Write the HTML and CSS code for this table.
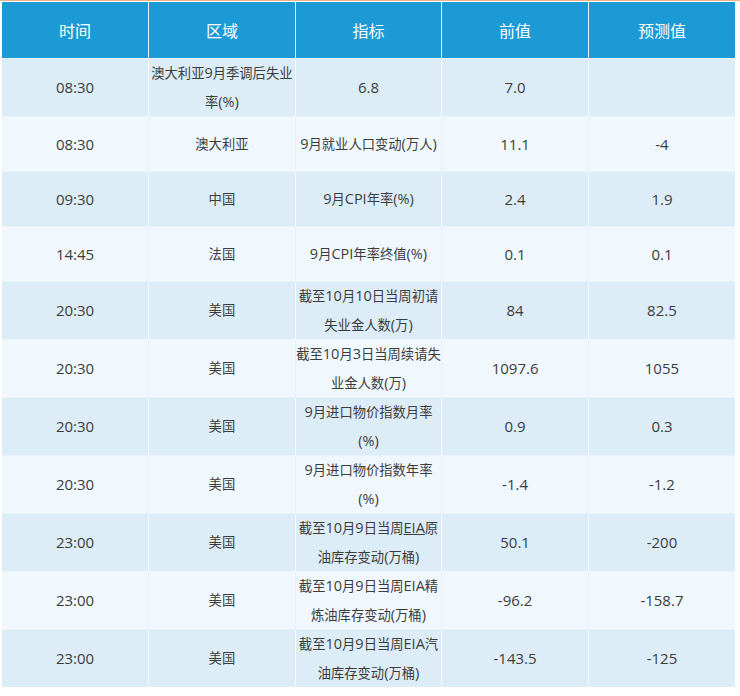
FILE: index.html
```html
<!DOCTYPE html>
<html lang="zh">
<head>
<meta charset="utf-8">
<title>财经日历</title>
<link rel="stylesheet" href="styles.css">
</head>
<body>
<div class="wrap">
<table class="cal">
  <colgroup><col><col><col><col><col></colgroup>
  <thead>
    <tr><th>时间</th><th>区域</th><th>指标</th><th>前值</th><th>预测值</th></tr>
  </thead>
  <tbody>
    <tr><td class="n">08:30</td><td>澳大利亚<span class="n">9</span>月季调后失业率<span class="n">(%)</span></td><td class="n">6.8</td><td class="n">7.0</td><td class="n"></td></tr>
    <tr><td class="n">08:30</td><td>澳大利亚</td><td><span class="n">9</span>月就业人口变动<span class="n">(</span>万人<span class="n">)</span></td><td class="n">11.1</td><td class="n">-4</td></tr>
    <tr><td class="n">09:30</td><td>中国</td><td><span class="n">9</span>月<span class="n">CPI</span>年率<span class="n">(%)</span></td><td class="n">2.4</td><td class="n">1.9</td></tr>
    <tr><td class="n">14:45</td><td>法国</td><td><span class="n">9</span>月<span class="n">CPI</span>年率终值<span class="n">(%)</span></td><td class="n">0.1</td><td class="n">0.1</td></tr>
    <tr><td class="n">20:30</td><td>美国</td><td>截至<span class="n">10</span>月<span class="n">10</span>日当周初请失业金人数<span class="n">(</span>万<span class="n">)</span></td><td class="n">84</td><td class="n">82.5</td></tr>
    <tr><td class="n">20:30</td><td>美国</td><td>截至<span class="n">10</span>月<span class="n">3</span>日当周续请失业金人数<span class="n">(</span>万<span class="n">)</span></td><td class="n">1097.6</td><td class="n">1055</td></tr>
    <tr><td class="n">20:30</td><td>美国</td><td><span class="n">9</span>月进口物价指数月率<span class="n">(%)</span></td><td class="n">0.9</td><td class="n">0.3</td></tr>
    <tr><td class="n">20:30</td><td>美国</td><td><span class="n">9</span>月进口物价指数年率<span class="n">(%)</span></td><td class="n">-1.4</td><td class="n">-1.2</td></tr>
    <tr><td class="n">23:00</td><td>美国</td><td>截至<span class="n">10</span>月<span class="n">9</span>日当周<span class="n link">EIA</span>原油库存变动<span class="n">(</span>万桶<span class="n">)</span></td><td class="n">50.1</td><td class="n">-200</td></tr>
    <tr><td class="n">23:00</td><td>美国</td><td>截至<span class="n">10</span>月<span class="n">9</span>日当周<span class="n">EIA</span>精炼油库存变动<span class="n">(</span>万桶<span class="n">)</span></td><td class="n">-96.2</td><td class="n">-158.7</td></tr>
    <tr><td class="n">23:00</td><td>美国</td><td>截至<span class="n">10</span>月<span class="n">9</span>日当周<span class="n">EIA</span>汽油库存变动<span class="n">(</span>万桶<span class="n">)</span></td><td class="n">-143.5</td><td class="n">-125</td></tr>
  </tbody>
</table>
</div>
</body>
</html>
```

FILE: styles.css
```css
html, body {
  margin: 0;
  padding: 0;
  background: #ffffff;
}

.wrap {
  padding: 0 5px 0 2px;
  border-top: 1px solid #f3b48c;
  width: 733px;
}

.cal {
  width: 733px;
  table-layout: fixed;
  border-collapse: collapse;
  font-family: "Open Sans", "Noto Sans CJK SC", sans-serif;
  font-size: 13.3px;
  color: #3c3c3c;
  margin-top: 1px;
}

.cal th {
  background: #1c9ad6;
  color: #ffffff;
  font-weight: normal;
  font-size: 16px;
  height: 56px;
  padding: 0;
  border-left: 1px solid #e9f4fb;
  text-align: center;
  vertical-align: middle;
}

.cal th:first-child {
  border-left: none;
}

.cal td {
  height: 54px;
  padding: 0;
  line-height: 28.5px;
  text-align: center;
  vertical-align: middle;
  border-left: 1px solid #f3f9fd;
  border-top: 1px solid #eaf3fa;
}

.cal td.n {
  font-size: 15px;
}

.cal span.n {
  font-size: 14.5px;
}

.cal td:first-child {
  border-left: none;
}

.cal tbody tr:nth-child(odd) td {
  background: #dcedf8;
}

.cal tbody tr:nth-child(even) td {
  background: #f0f8fe;
  border-left-color: #e6f0f7;
}

.link {
  text-decoration: underline;
}
```
